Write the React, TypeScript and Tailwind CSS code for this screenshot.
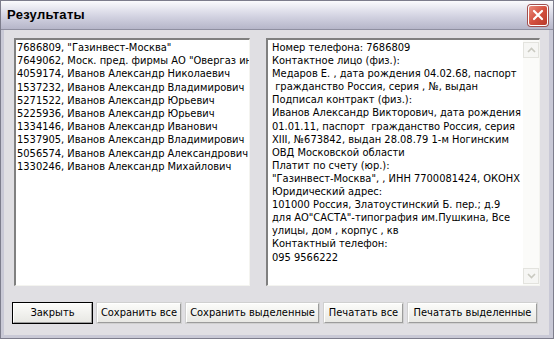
import React from "react";

const listItems = [
  '7686809, "Газинвест-Москва"',
  '7649062, Моск. пред. фирмы АО "Овергаз инк"',
  "4059174, Иванов Александр Николаевич",
  "1537232, Иванов Александр Владимирович",
  "5271522, Иванов Александр Юрьевич",
  "5225936, Иванов Александр Юрьевич",
  "1334146, Иванов Александр Иванович",
  "1537905, Иванов Александр Владимирович",
  "5056574, Иванов Александр Александрович",
  "1330246, Иванов Александр Михайлович",
];

const details = [
  "Номер телефона: 7686809",
  "Контактное лицо (физ.):",
  "Медаров Е. , дата рождения 04.02.68, паспорт",
  " гражданство Россия, серия , №, выдан",
  "Подписал контракт (физ.):",
  "Иванов Александр Викторович, дата рождения",
  "01.01.11, паспорт  гражданство Россия, серия",
  "XIII, №673842, выдан 28.08.79 1-м Ногинским",
  "ОВД Московской области",
  "Платит по счету (юр.):",
  '"Газинвест-Москва", , ИНН 7700081424, ОКОНХ',
  "Юридический адрес:",
  "101000 Россия, Златоустинский Б. пер.; д.9",
  'для АО"САСТА"-типография им.Пушкина, Все',
  "улицы, дом , корпус , кв",
  "Контактный телефон:",
  "095 9566222",
];

const font = { fontFamily: '"DejaVu Sans Condensed", "DejaVu Sans", sans-serif' };

function Btn({ label, w, def }: { label: string; w: string; def?: boolean }) {
  return (
    <div
      className={`${w} h-[22px] flex items-center justify-center text-[11px] text-black bg-[#f4f3ee] ${
        def ? "border border-black" : "border border-[#d0d0d0]"
      }`}
    >
      <div className="w-full h-full flex items-center justify-center border-t border-l border-t-white border-l-white border-r border-b border-r-[#9c9c9c] border-b-[#9c9c9c] bg-gradient-to-b from-[#fbfbf9] to-[#e8e8e4]">
        {label}
      </div>
    </div>
  );
}

function ScrollArrow({ up }: { up?: boolean }) {
  return (
    <div className="w-[16px] h-[16px] bg-[#f6f6f4] border border-[#e3e3de] flex items-center justify-center">
      <svg width="9" height="6" viewBox="0 0 9 6">
        <path
          d={up ? "M1 5 L4.5 1.5 L8 5" : "M1 1 L4.5 4.5 L8 1"}
          fill="none"
          stroke="#c9c9c0"
          strokeWidth="1.6"
        />
      </svg>
    </div>
  );
}

export default function App() {
  return (
    <div
      className="w-[554px] h-[339px] flex flex-col bg-[#c9c9d6] border border-[#7d7d8c] overflow-hidden"
      style={font}
    >
      {/* Title bar */}
      <div className="h-[29px] shrink-0 flex items-center justify-between pl-[6px] pr-[5px] bg-gradient-to-b from-[#fbfbfd] via-[#d6d6e4] to-[#b6b6c9] border-b border-[#8f8fa0]">
        <span
          className="text-[13px] font-bold text-black tracking-[0.3px]"
          style={{ fontFamily: '"Liberation Sans", Arial, sans-serif' }}
        >
          Результаты
        </span>
        <div className="w-[20px] h-[21px] rounded-[3px] border border-[#ffffff] bg-gradient-to-br from-[#e88a7c] via-[#d4503f] to-[#b83a2c] flex items-center justify-center shadow-[0_0_0_1px_#a05050]">
          <svg width="12" height="12" viewBox="0 0 12 12">
            <path d="M2 2 L10 10 M10 2 L2 10" stroke="white" strokeWidth="2.2" strokeLinecap="round" />
          </svg>
        </div>
      </div>

      {/* Body */}
      <div className="flex-1 flex flex-col bg-[#e0dfe3] ml-[3px] mr-[4px] mb-[3px] pt-[8px]">
        <div className="flex h-[248px] pl-[10px] gap-[16px]">
          {/* Left list */}
          <div className="w-[236px] h-full border-t-2 border-l-2 border-t-[#808080] border-l-[#808080] border-b border-r border-b-[#f4f4f0] border-r-[#f4f4f0] bg-white overflow-hidden">
            <div className="pl-[1px] pt-[1px] text-[11px] leading-[13.2px] text-black whitespace-nowrap">
              {listItems.map((t, i) => (
                <div key={i}>{t}</div>
              ))}
            </div>
          </div>
          {/* Right text */}
          <div className="w-[274px] h-full flex border-t-2 border-l-2 border-t-[#808080] border-l-[#808080] border-b border-r border-b-[#f4f4f0] border-r-[#f4f4f0] bg-white overflow-hidden">
            <div className="flex-1 pl-[4px] pt-[1px] text-[11px] leading-[13.1px] text-black whitespace-pre overflow-hidden">
              {details.map((t, i) => (
                <div key={i}>{t}</div>
              ))}
            </div>
            <div className="w-[16px] h-full flex flex-col justify-between bg-[#fbfbf9] pt-[2px] pb-[1px]">
              <ScrollArrow up />
              <ScrollArrow />
            </div>
          </div>
        </div>

        {/* Buttons */}
        <div className="flex pl-[8px] mt-[16px] gap-[3px]">
          <Btn label="Закрыть" w="w-[81px]" def />
          <Btn label="Сохранить все" w="w-[86px]" />
          <Btn label="Сохранить выделенные" w="w-[135px]" />
          <Btn label="Печатать все" w="w-[81px]" />
          <Btn label="Печатать выделенные" w="w-[131px]" />
        </div>
      </div>
    </div>
  );
}
